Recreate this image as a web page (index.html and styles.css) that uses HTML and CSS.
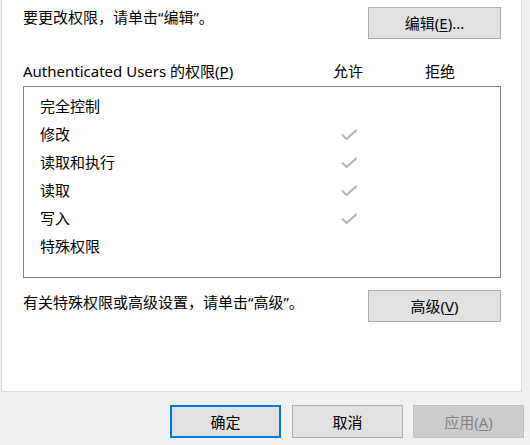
FILE: index.html
```html
<!DOCTYPE html>
<html lang="zh-CN">
<head>
<meta charset="utf-8">
<title>安全</title>
<link rel="stylesheet" href="styles.css">
</head>
<body>
<div class="panel">
  <div class="row-top">
    <div class="hint">要更改权限，请单击“编辑”。</div>
    <button class="btn">编辑(<u>E</u>)...</button>
  </div>
  <div class="perm-head">
    <div class="perm-label">Authenticated Users 的权限(<u>P</u>)</div>
    <div class="col">允许</div>
    <div class="col">拒绝</div>
    <div></div>
  </div>
  <div class="perm-list">
    <div class="perm-row"><div class="name">完全控制</div><div class="col"></div><div class="col"></div><div></div></div>
    <div class="perm-row"><div class="name">修改</div><div class="col"><svg class="check" width="16" height="11" viewBox="0 0 16 11"><path d="M1 5.5 L5.5 10 L15.5 1"/></svg></div><div class="col"></div><div></div></div>
    <div class="perm-row"><div class="name">读取和执行</div><div class="col"><svg class="check" width="16" height="11" viewBox="0 0 16 11"><path d="M1 5.5 L5.5 10 L15.5 1"/></svg></div><div class="col"></div><div></div></div>
    <div class="perm-row"><div class="name">读取</div><div class="col"><svg class="check" width="16" height="11" viewBox="0 0 16 11"><path d="M1 5.5 L5.5 10 L15.5 1"/></svg></div><div class="col"></div><div></div></div>
    <div class="perm-row"><div class="name">写入</div><div class="col"><svg class="check" width="16" height="11" viewBox="0 0 16 11"><path d="M1 5.5 L5.5 10 L15.5 1"/></svg></div><div class="col"></div><div></div></div>
    <div class="perm-row"><div class="name">特殊权限</div><div class="col"></div><div class="col"></div><div></div></div>
  </div>
  <div class="row-adv">
    <div class="hint adv-hint">有关特殊权限或高级设置，请单击“高级”。</div>
    <button class="btn">高级(<u>V</u>)</button>
  </div>
</div>
<div class="footer">
  <button class="btn btn-default">确定</button>
  <button class="btn">取消</button>
  <button class="btn btn-disabled">应用(<u>A</u>)</button>
</div>
</body>
</html>
```

FILE: styles.css
```css
html, body {
  margin: 0;
  padding: 0;
}
body {
  width: 530px;
  height: 445px;
  overflow: hidden;
  background: #f0f0f0;
  font-family: "Noto Sans", "Noto Sans CJK SC", sans-serif;
  font-size: 15px;
  line-height: 20px;
  color: #000;
}
.panel {
  margin-left: 1px;
  width: 521px;
  height: 392px;
  box-sizing: border-box;
  background: #fff;
  border-left: 1px solid #dadada;
  border-right: 1px solid #dadada;
  border-bottom: 1px solid #dadada;
  padding: 7px 20px 0 21px;
}
.btn {
  width: 133px;
  height: 32px;
  box-sizing: border-box;
  background: #e1e1e1;
  border: 1px solid #adadad;
  border-radius: 0;
  padding: 0;
  margin: 0;
  font-family: inherit;
  font-size: 15px;
  line-height: 20px;
  color: #000;
}
.btn u {
  text-underline-offset: 2px;
}
.row-top {
  display: flex;
  justify-content: space-between;
  align-items: flex-start;
}
.perm-head {
  display: grid;
  grid-template-columns: 1fr 92px 92px 16px;
  margin-top: 22px;
}
.col {
  text-align: center;
  display: flex;
  justify-content: center;
  align-items: center;
}
.perm-head .col {
  display: block;
  padding-left: 2px;
}
.perm-list {
  margin-top: 5px;
  height: 192px;
  box-sizing: border-box;
  border: 1px solid #828282;
  padding: 5px 0 0 16px;
}
.perm-row {
  display: grid;
  grid-template-columns: 1fr 92px 92px 15px;
  height: 28px;
  line-height: 28px;
}
.check {
  display: block;
  margin-left: 3px;
  margin-top: 1px;
}
.check path {
  fill: none;
  stroke: #b3b3b3;
  stroke-width: 2;
}
.row-adv {
  display: flex;
  justify-content: space-between;
  align-items: flex-start;
  margin-top: 12px;
}
.adv-hint {
  padding-top: 2px;
}
.footer {
  display: flex;
  justify-content: flex-end;
  gap: 10px;
  padding: 13px 6px 0 0;
}
.footer .btn {
  width: 111px;
  height: 33px;
}
.footer .btn:first-child {
  margin-right: 1px;
}
.btn-default {
  border: 2px solid #0078d7;
}
.btn-disabled {
  background: #cccccc;
  border-color: #bfbfbf;
  color: #838383;
}
```
